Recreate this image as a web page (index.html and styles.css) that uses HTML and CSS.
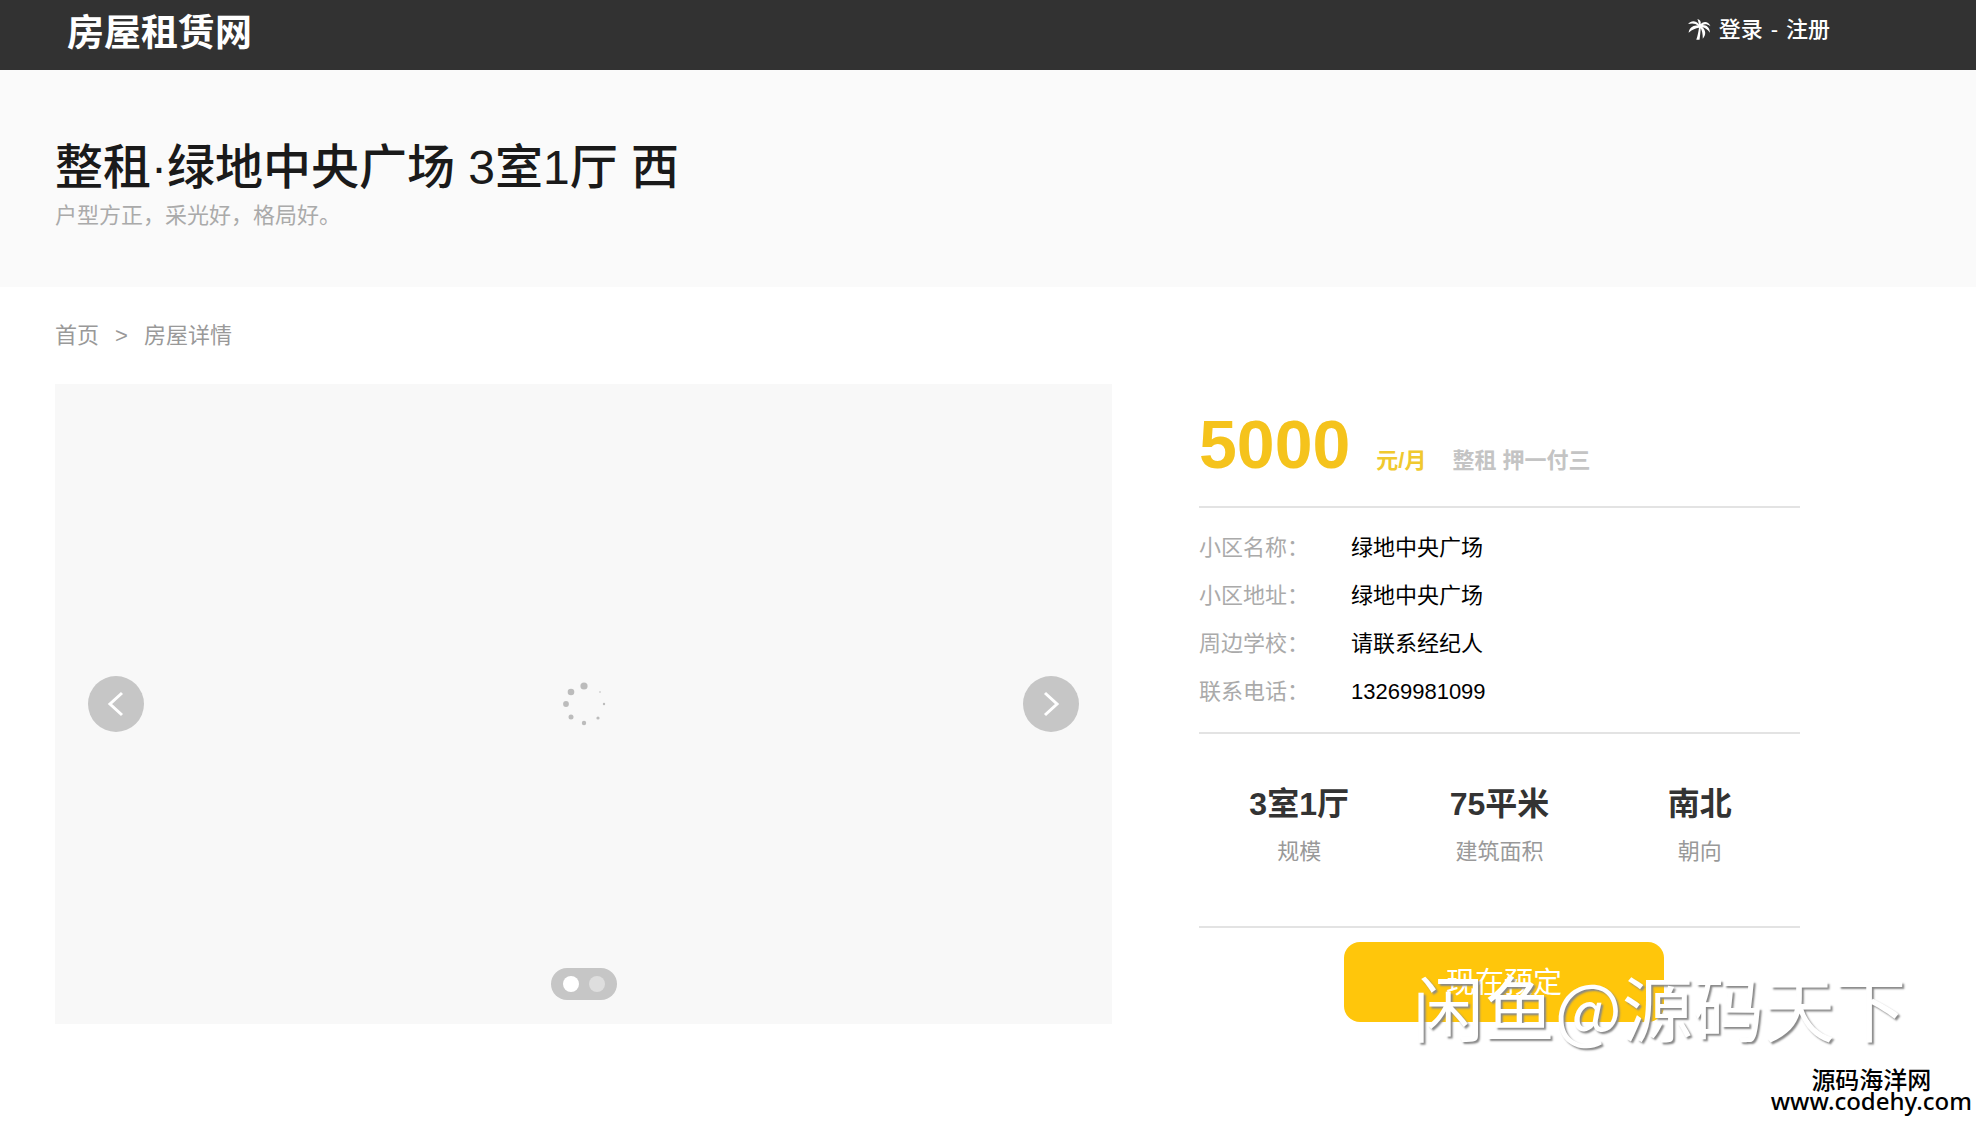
FILE: index.html
```html
<!doctype html>
<html lang="zh-CN">
<head>
<meta charset="utf-8">
<title>房屋租赁网</title>
<link rel="stylesheet" href="styles.css">
</head>

<body>
<div class="header">
	<a class="logo" href="#">房屋租赁网</a>
	<div class="login">
		<svg class="palm" viewBox="0 0 22 22" width="24" height="24">
			<path d="M11 6C8 2 4 2 1 5.500C5 4.500 8 5 10 7C6 6 2 9 1.500 13.500C5 10.500 8 9.500 11 9C10.500 12 10 16 8.500 20H11.500C12 16 12.500 12 12.500 9.500C13.500 11 14.500 14 14.500 19C18 15 17 11 14 8.500C16.500 9 19 10.500 21 13.500C21 9 18 6.500 14.500 6.500C16 5.500 18.500 5.500 21.500 7.500C19.500 3 15.500 2.500 12.500 5.500C13 3.500 12 1.500 9.500 1C10.500 3 10.500 4.500 11 6Z" fill="#fff"/>
		</svg>
		<a href="#">登录</a>
		<span>-</span>
		<a href="#">注册</a>
	</div>
</div>

<div class="banner">
	<h1>整租·绿地中央广场 3室1厅 西</h1>
	<p>户型方正，采光好，格局好。</p>
</div>

<div class="crumb">
	<a href="#">首页</a>
	<span>&gt;</span>
	<a href="#">房屋详情</a>
</div>

<div class="main">
	<div class="gallery">
		<button class="arrow" type="button" aria-label="上一张">
			<svg viewBox="0 0 56 56" width="56" height="56"><path d="M34 17L22 28L34 39" fill="none" stroke="#fff" stroke-width="3"/></svg>
		</button>
		<svg class="loading" viewBox="0 0 48 48" width="48" height="48" fill="#bcbcbc">
			<circle cx="24" cy="6" r="3.600"/>
			<circle cx="11" cy="12" r="3.300"/>
			<circle cx="6" cy="24" r="2.900"/>
			<circle cx="11" cy="37" r="2.500"/>
			<circle cx="24" cy="43" r="2.200"/>
			<circle cx="38" cy="38" r="1.600"/>
			<circle cx="44" cy="24" r="1.200"/>
			<circle cx="40" cy="12" r=".800"/>
		</svg>
		<button class="arrow" type="button" aria-label="下一张">
			<svg viewBox="0 0 56 56" width="56" height="56"><path d="M22 17L34 28L22 39" fill="none" stroke="#fff" stroke-width="3"/></svg>
		</button>
		<div class="dots"><i class="on"></i><i></i></div>
	</div>

	<div class="info">
		<div class="price">
			<strong>5000</strong>
			<b>元/月</b>
			<em>整租 押一付三</em>
		</div>
		<dl class="desc">
			<dt>小区名称：</dt><dd>绿地中央广场</dd>
			<dt>小区地址：</dt><dd>绿地中央广场</dd>
			<dt>周边学校：</dt><dd>请联系经纪人</dd>
			<dt>联系电话：</dt><dd>13269981099</dd>
		</dl>
		<ul class="size">
			<li><strong>3室1厅</strong><span>规模</span></li>
			<li><strong>75平米</strong><span>建筑面积</span></li>
			<li><strong>南北</strong><span>朝向</span></li>
		</ul>
		<button class="order" type="button">现在预定</button>
	</div>
</div>

<div class="mark">闲鱼@源码天下</div>
<div class="site">源码海洋网<br>www.codehy.com</div>
</body>
</html>
```
FILE: styles.css
```css
*{ margin:0; padding:0; list-style:none; box-sizing:border-box;}
body{ position:relative; min-height:100vh; background:#fff; color:#000; font:22px/32px "Liberation Sans","Noto Sans CJK SC",sans-serif;}
a{ color:inherit; text-decoration:none;}
em,i{ font-style:normal;}
button{ border:none; cursor:pointer; font-family:inherit;}

.header{ display:flex; justify-content:space-between; height:70px; padding:0 146px 0 67px; background:#323232; color:#fff;}
.logo{ font-size:37px; font-weight:bold; line-height:68px;}
.login{ display:flex; align-items:center; gap:8px; height:60px; font-weight:500;}

.banner{ height:217px; padding:68px 55px 0; background:#fafafa;}
.banner h1{ color:#1a1a1a; font-size:48px; font-weight:500; line-height:60px;}
.banner p{ padding-top:2px; color:#aaa;}

.crumb{ display:flex; gap:16px; padding:33px 55px 32px; color:#999;}

.main{ display:grid; grid-template-columns:1057fr 601fr; gap:87px; padding:0 176px 0 55px;}

.gallery{ position:relative; display:flex; align-items:center; justify-content:space-between; height:640px; padding:0 33px; background:#f8f8f8;}
.arrow{ width:56px; height:56px; border-radius:50%; background:#c6c6c6;}
.arrow svg{ display:block;}
.dots{ position:absolute; left:50%; bottom:24px; display:flex; gap:10px; padding:8px 12px; border-radius:16px; background:#c6c6c6; transform:translateX(-50%);}
.dots i{ width:16px; height:16px; border-radius:50%; background:#dedede;}
.dots .on{ background:#fff;}

.price{ display:flex; align-items:baseline; height:124px; padding-top:20px; border-bottom:2px solid #e3e3e3; line-height:80px;}
.price strong{ color:#f5c31c; font-size:68px;}
.price b{ margin:0 26px; color:#f0c92f;}
.price em{ color:#c4c4c4; font-weight:bold;}

.desc{ display:grid; grid-template-columns:152px 1fr; padding:16px 0; border-bottom:2px solid #e3e3e3; line-height:48px;}
.desc dt{ color:#aaa;}

.size{ display:flex; height:194px; padding-top:46px; border-bottom:2px solid #e3e3e3; text-align:center;}
.size li{ flex:1;}
.size strong,.size span{ display:block;}
.size strong{ color:#333; font-size:32px; line-height:48px;}
.size span{ padding-top:8px; color:#999;}

.order{ display:block; width:320px; height:80px; margin:14px 0 0 145px; padding-bottom:4px; border-radius:16px; background:#ffc60b; color:#fff; font-size:29px;}

/* 水印 */
.mark{ position:absolute; right:70px; bottom:67px; color:#fff; font-size:71px; line-height:100px; font-family:"Noto Sans CJK SC",sans-serif; text-shadow:2px 2px 2px #888;}
.site{ position:absolute; right:4px; bottom:11px; font-family:"Noto Sans","Noto Sans CJK SC",sans-serif; font-size:24px; line-height:21px; font-weight:500; text-align:center;}
```
